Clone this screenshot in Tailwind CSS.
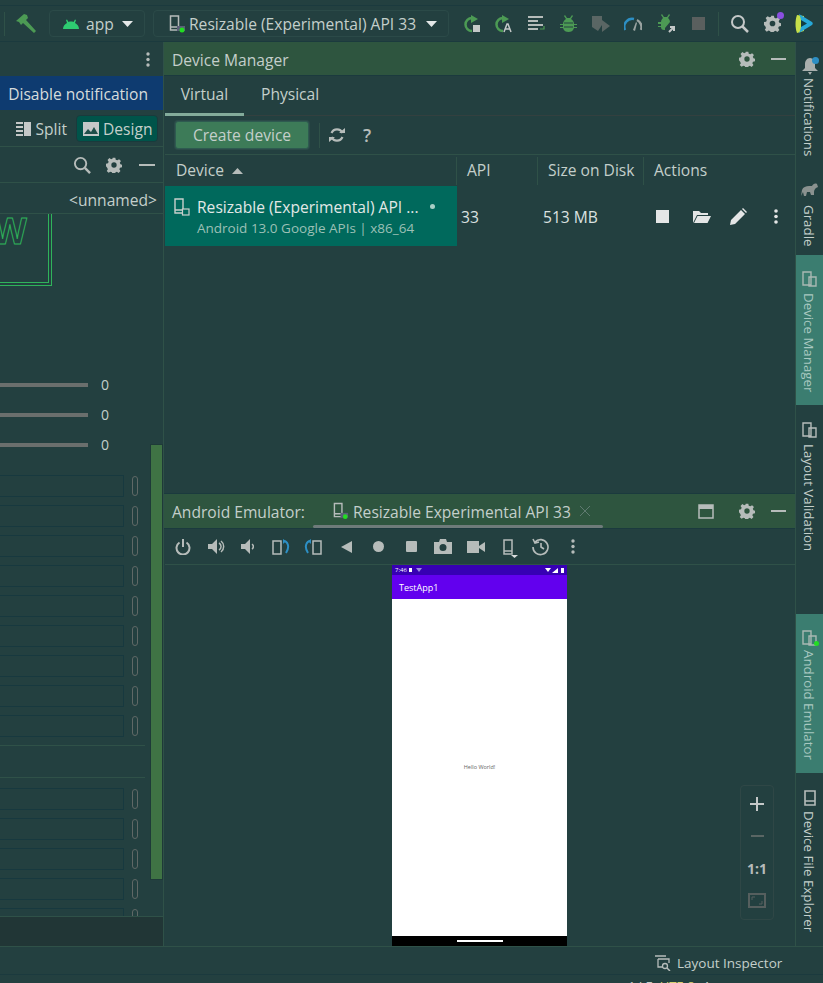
<!DOCTYPE html>
<html lang="en">
<head>
<meta charset="UTF-8">
<title>Android Studio</title>
<script src="https://cdn.jsdelivr.net/npm/@tailwindcss/browser@4"></script>
</head>
<body class="bg-[#234040] overflow-hidden">
<div class="w-[823px] h-[983px] flex flex-col font-['Open_Sans',sans-serif] text-[15.6px] text-[#c4cfcb] overflow-hidden">

  <!-- top toolbar -->
  <div class="h-[37px] shrink-0 mt-[5px] border-t border-t-[#1b3a3e] border-b border-b-[#1b3a3e] flex items-center">
    <div class="w-px h-[24px] bg-[#2f5148] ml-[4px]"></div>
    <svg class="ml-[11px] w-[20px] h-[19px]" viewBox="0 0 20 19"><path d="M0 7L8 0l3 1 1 3-2 2 10 11-2 2L7 9 5 11 3 8z" fill="#4c9a54"/></svg>
    <div class="ml-[13px] w-[96px] h-[27px] rounded border border-[#2b4a48] flex items-center pl-[13px]">
      <svg class="w-[16px] h-[12px]" viewBox="0 0 16 12"><path d="M0 11c0-3 2-5 4-6L3 2l1-.5L5.500 4c1.600-.6 3.400-.6 5 0L12 1.500l1 .5-1 3c2 1 4 3 4 6z" fill="#2ecc71"/></svg>
      <span class="ml-[7px] pt-[3px]">app</span>
      <svg class="ml-[8px] w-[11px] h-[6px]" viewBox="0 0 11 6"><path d="M0 0h11L5.500 6z" fill="#e4e8e8"/></svg>
    </div>
    <div class="ml-[8px] w-[296px] h-[27px] rounded border border-[#2b4a48] flex items-center pl-[15px]">
      <svg class="w-[17px] h-[18px]" viewBox="0 0 17 18"><path d="M1.500 1h8v14h-8zM1.500 12h8" fill="none" stroke="#b6bcba" stroke-width="1.500"/><rect x="8" y="11" width="8" height="5" fill="#5a5f78"/><circle cx="13" cy="15" r="2.500" fill="#22dd22"/></svg>
      <span class="ml-[3px] pt-[3px] whitespace-nowrap">Resizable (Experimental) API 33</span>
      <svg class="ml-[10px] w-[11px] h-[6px]" viewBox="0 0 11 6"><path d="M0 0h11L5.500 6z" fill="#e4e8e8"/></svg>
    </div>
    <div class="ml-[14px] flex items-center">
      <svg class="w-[18px] h-[18px]" viewBox="0 0 18 18"><path d="M9 3a6.500 6.500 0 1 0 0 13" fill="none" stroke="#4c9a54" stroke-width="2.500"/><path d="M8 0l7 4-7 4z" fill="#4c9a54"/><rect x="10" y="10" width="7" height="7" fill="#c4c8c8"/></svg>
      <svg class="ml-[13px] w-[18px] h-[18px]" viewBox="0 0 18 18"><path d="M9 3a6.500 6.500 0 1 0 0 13" fill="none" stroke="#4c9a54" stroke-width="2.500"/><path d="M8 0l7 4-7 4z" fill="#4c9a54"/><path d="M10 17l3-8h1l3 8M11.500 14h4" fill="none" stroke="#c4c8c8" stroke-width="1.500"/></svg>
      <svg class="ml-[16px] w-[18px] h-[18px]" viewBox="0 0 18 18"><path d="M0 1h15v2H0zM0 5h10v2H0zM0 9h15v2H0zM0 13h10v2H0z" fill="#b6bcba"/><path d="M12 14h4v-3" fill="none" stroke="#4c9a54" stroke-width="1.200"/></svg>
      <svg class="ml-[14px] w-[17px] h-[18px]" viewBox="0 0 17 18"><path d="M5 0l2 3h3l2-3 1 1-2 3c2 1 3 3 3 5h3v1h-3v2h3v1h-3c-1 3-3 4-5.500 4S4 16 3 13H0v-1h3v-2H0V9h3c0-2 1-4 3-5L4 1z" fill="#4c9a54"/><path d="M4 8h9M4 12h9" stroke="#234040" stroke-width="1"/></svg>
      <svg class="ml-[15px] w-[19px] h-[18px]" viewBox="0 0 19 18"><path d="M0 1h10v9l-4 6-6-4z" fill="#5a6664"/><path d="M10 5l8 6-8 6z" fill="#5a6664"/></svg>
      <svg class="ml-[13px] w-[18px] h-[14px]" viewBox="0 0 18 14"><path d="M1 13A8 8 0 0 1 10 2" fill="none" stroke="#2d8fc4" stroke-width="2.500"/><path d="M13 3a8 8 0 0 1 4 10" fill="none" stroke="#9aa3a1" stroke-width="2.500"/><path d="M9 13l3-8 1 1-2 8z" fill="#9aa3a1"/></svg>
      <svg class="ml-[16px] w-[19px] h-[19px]" viewBox="0 0 19 19"><path d="M4 0l2 3h3l2-3 1 1-2 3c1 1 2 2 2 4l-5 6v2H6c-2 0-3-1-3-3H0v-1h3v-2H0V8h3c0-2 1-3 2-4L3 1z" fill="#4c9a54"/><path d="M11 18l5-5m-4 0h4v4" fill="none" stroke="#c4c8c8" stroke-width="2"/></svg>
      <div class="ml-[15px] w-[13px] h-[13px] bg-[#5a5f5e]"></div>
    </div>
    <div class="w-px h-[24px] bg-[#2f5148] ml-[13px]"></div>
    <svg class="ml-[11px] w-[19px] h-[19px]" viewBox="0 0 19 19"><circle cx="8" cy="8" r="6" fill="none" stroke="#c4c8c8" stroke-width="2"/><path d="M12.500 12.500L18 18" stroke="#c4c8c8" stroke-width="2.500"/></svg>
    <div class="relative ml-[15px] w-[17px] h-[17px]">
      <svg class="w-[17px] h-[17px]" viewBox="0 0 24 24"><path d="M10 1h4l.6 3 2.400 1 2.600-1.700 2.800 2.800L20.700 8.700l1 2.300 2.300.5v4l-3 .6-1 2.400 1.700 2.600-2.800 2.800-2.600-1.700-2.300 1-.5 2.800h-4l-.6-3-2.400-1-2.600 1.700-2.800-2.800 1.700-2.600-1-2.300L0 14v-4l3-.6 1-2.400-1.700-2.600 2.800-2.800L7.700 3.300l2.300-1zM12 8a4 4 0 1 0 0 8 4 4 0 0 0 0-8z" fill="#b6bcba"/></svg>
      <div class="absolute -top-[3px] -right-[3px] w-[7px] h-[7px] rounded-full bg-[#8a4fe0]"></div>
    </div>
    <svg class="ml-[14px] w-[18px] h-[19px]" viewBox="0 0 18 19"><path d="M2 1l7 1v15l-7 2c-2-5-2-13 0-18z" fill="#c6e04a"/><path d="M4 0l13 8c1 1 1 2 0 3L4 19c3-6 3-13 0-19z" fill="#27a8d8"/><path d="M6 6l6 3.500L6 13z" fill="#123c44"/></svg>
  </div>

  <div class="flex-1 flex min-h-0">

    <!-- left pane -->
    <div class="relative w-[164px] shrink-0 border-r border-[#2f5148] flex flex-col overflow-hidden">
      <div class="h-[34px] shrink-0 flex items-center justify-end pr-[13px]">
        <svg class="w-[4px] h-[15px]" viewBox="0 0 4 15"><circle cx="2" cy="2" r="1.700" fill="#b6bcba"/><circle cx="2" cy="7.500" r="1.700" fill="#b6bcba"/><circle cx="2" cy="13" r="1.700" fill="#b6bcba"/></svg>
      </div>
      <div class="h-[34px] shrink-0 pt-[4px] bg-[#0e3b70] flex items-center justify-end pr-[15px] text-[#d6dcdc] whitespace-nowrap">Disable notification</div>
      <div class="h-[37px] shrink-0 pt-[1px] border-b border-[#2f5148] flex items-center justify-end pr-[5px]">
        <svg class="w-[15px] h-[14px]" viewBox="0 0 15 14"><path d="M0 0h7v2H0zM0 4h7v2H0zM0 8h7v2H0zM0 12h7v2H0z" fill="#c4c8c8"/><rect x="8" width="7" height="14" fill="#c4c8c8"/></svg>
        <span class="ml-[4px] pt-[2px]">Split</span>
        <div class="ml-[9px] w-[82px] h-[27px] rounded-[4px] bg-[#00544a] border border-[#1a3a3c] flex items-center pl-[6px]">
          <svg class="w-[16px] h-[14px]" viewBox="0 0 16 14"><rect width="16" height="14" fill="#c4c8c8"/><path d="M1 12l4-5 3 3 3-5 4 7z" fill="#1f4f4a"/></svg>
          <span class="ml-[4px] pt-[2px]">Design</span>
        </div>
      </div>
      <div class="h-[36px] shrink-0 border-b border-[#2f5148] flex items-center justify-end pr-[8px]">
        <svg class="w-[18px] h-[18px]" viewBox="0 0 19 19"><circle cx="8" cy="8" r="6" fill="none" stroke="#b6bcba" stroke-width="2"/><path d="M12.500 12.500L18 18" stroke="#b6bcba" stroke-width="2.500"/></svg>
        <svg class="ml-[15px] w-[16px] h-[16px]" viewBox="0 0 24 24"><path d="M10 1h4l.6 3 2.400 1 2.600-1.700 2.800 2.800L20.700 8.700l1 2.300 2.300.5v4l-3 .6-1 2.400 1.700 2.600-2.800 2.800-2.600-1.700-2.300 1-.5 2.800h-4l-.6-3-2.400-1-2.600 1.700-2.800-2.800 1.700-2.600-1-2.300L0 14v-4l3-.6 1-2.400-1.700-2.600 2.800-2.800L7.700 3.300l2.300-1zM12 8a4 4 0 1 0 0 8 4 4 0 0 0 0-8z" fill="#b6bcba"/></svg>
        <div class="ml-[17px] w-[16px] h-[2px] bg-[#b6bcba]"></div>
      </div>
      <div class="h-[31px] shrink-0 pt-[5px] flex items-center justify-end pr-[6px] text-[#c4cfcb] border-b border-[#2f5148]">&lt;unnamed&gt;</div>

      <div class="flex-1 min-h-0 overflow-hidden flex flex-col pr-[20px]">
        <!-- preview box -->
        <div class="h-[72px] w-[52px] shrink-0 border-r-[4px] border-b-[4px] border-double border-[#2fb35a] flex items-start">
          <span class="shrink-0 text-transparent [-webkit-text-stroke:1px_#2fb35a] text-[35px] leading-[36px] font-bold -ml-[7px] -mt-[1px]">W</span>
        </div>
        <!-- sliders -->
        <div class="mt-[92px] flex flex-col gap-[17px]">
          <div class="flex items-center h-[13px]"><div class="w-[88px] h-[4px] bg-[#6a6f6d]"></div><span class="ml-[13px] text-[14px]">0</span></div>
          <div class="flex items-center h-[13px]"><div class="w-[88px] h-[4px] bg-[#6a6f6d]"></div><span class="ml-[13px] text-[14px]">0</span></div>
          <div class="flex items-center h-[13px]"><div class="w-[88px] h-[4px] bg-[#6a6f6d]"></div><span class="ml-[13px] text-[14px]">0</span></div>
        </div>
        <!-- field rows -->
        <div class="mt-[24px] -ml-[2px] flex flex-col gap-[8px]">
          <div class="flex items-center h-[22px] shrink-0"><div class="w-[126px] h-[22px] shrink-0 border border-[#17393f]"></div><div class="ml-[8px] w-[6px] h-[20px] shrink-0 rounded-full border border-[#5f6866]"></div></div>
          <div class="flex items-center h-[22px] shrink-0"><div class="w-[126px] h-[22px] shrink-0 border border-[#17393f]"></div><div class="ml-[8px] w-[6px] h-[20px] shrink-0 rounded-full border border-[#5f6866]"></div></div>
          <div class="flex items-center h-[22px] shrink-0"><div class="w-[126px] h-[22px] shrink-0 border border-[#17393f]"></div><div class="ml-[8px] w-[6px] h-[20px] shrink-0 rounded-full border border-[#5f6866]"></div></div>
          <div class="flex items-center h-[22px] shrink-0"><div class="w-[126px] h-[22px] shrink-0 border border-[#17393f]"></div><div class="ml-[8px] w-[6px] h-[20px] shrink-0 rounded-full border border-[#5f6866]"></div></div>
          <div class="flex items-center h-[22px] shrink-0"><div class="w-[126px] h-[22px] shrink-0 border border-[#17393f]"></div><div class="ml-[8px] w-[6px] h-[20px] shrink-0 rounded-full border border-[#5f6866]"></div></div>
          <div class="flex items-center h-[22px] shrink-0"><div class="w-[126px] h-[22px] shrink-0 border border-[#17393f]"></div><div class="ml-[8px] w-[6px] h-[20px] shrink-0 rounded-full border border-[#5f6866]"></div></div>
          <div class="flex items-center h-[22px] shrink-0"><div class="w-[126px] h-[22px] shrink-0 border border-[#17393f]"></div><div class="ml-[8px] w-[6px] h-[20px] shrink-0 rounded-full border border-[#5f6866]"></div></div>
          <div class="flex items-center h-[22px] shrink-0"><div class="w-[126px] h-[22px] shrink-0 border border-[#17393f]"></div><div class="ml-[8px] w-[6px] h-[20px] shrink-0 rounded-full border border-[#5f6866]"></div></div>
          <div class="flex items-center h-[22px] shrink-0"><div class="w-[126px] h-[22px] shrink-0 border border-[#17393f]"></div><div class="ml-[8px] w-[6px] h-[20px] shrink-0 rounded-full border border-[#5f6866]"></div></div>
        </div>
        <div class="mt-[8px] h-[33px] w-[145px] shrink-0 border-y border-[#2f5148]"></div>
        <div class="mt-[10px] -ml-[2px] flex flex-col gap-[8px]">
          <div class="flex items-center h-[22px] shrink-0"><div class="w-[126px] h-[22px] shrink-0 border border-[#17393f]"></div><div class="ml-[8px] w-[6px] h-[20px] shrink-0 rounded-full border border-[#5f6866]"></div></div>
          <div class="flex items-center h-[22px] shrink-0"><div class="w-[126px] h-[22px] shrink-0 border border-[#17393f]"></div><div class="ml-[8px] w-[6px] h-[20px] shrink-0 rounded-full border border-[#5f6866]"></div></div>
          <div class="flex items-center h-[22px] shrink-0"><div class="w-[126px] h-[22px] shrink-0 border border-[#17393f]"></div><div class="ml-[8px] w-[6px] h-[20px] shrink-0 rounded-full border border-[#5f6866]"></div></div>
          <div class="flex items-center h-[22px] shrink-0"><div class="w-[126px] h-[22px] shrink-0 border border-[#17393f]"></div><div class="ml-[8px] w-[6px] h-[20px] shrink-0 rounded-full border border-[#5f6866]"></div></div>
          <div class="flex items-center h-[22px] shrink-0"><div class="w-[126px] h-[22px] shrink-0 border border-[#17393f]"></div><div class="ml-[8px] w-[6px] h-[20px] shrink-0 rounded-full border border-[#5f6866]"></div></div>
        </div>
      </div>
      <div class="h-[30px] shrink-0 bg-[#213636] border-t border-[#2f5148]"></div>
      <!-- scrollbar over the panel -->
      <div class="absolute left-[150px] top-[402px] w-[13px] h-[436px] bg-[#3f7344] border border-[#1e3a38]"></div>
    </div>

    <!-- center column -->
    <div class="flex-1 min-w-0 flex flex-col border-l border-[#234040]">
      <!-- device manager -->
      <div class="h-[34px] shrink-0 -ml-[1px] bg-[#2e553f] border-b border-[#1b3a3e] flex items-center pl-[8px] pr-[9px]">
        <span class="flex-1 pt-[4px]">Device Manager</span>
        <svg class="w-[16px] h-[16px]" viewBox="0 0 24 24"><path d="M10 1h4l.6 3 2.400 1 2.600-1.700 2.800 2.800L20.700 8.700l1 2.300 2.300.5v4l-3 .6-1 2.400 1.700 2.600-2.800 2.800-2.600-1.700-2.300 1-.5 2.800h-4l-.6-3-2.400-1-2.600 1.700-2.800-2.800 1.700-2.600-1-2.300L0 14v-4l3-.6 1-2.400-1.700-2.600 2.800-2.800L7.700 3.300l2.300-1zM12 8a4 4 0 1 0 0 8 4 4 0 0 0 0-8z" fill="#b6bcba"/></svg>
        <div class="ml-[16px] w-[15px] h-[2px] bg-[#b6bcba]"></div>
      </div>
      <div class="h-[40px] shrink-0 flex border-b border-[#33403f]">
        <div class="w-[79px] h-[40px] pt-[1px] flex items-center justify-center border-b-[3px] border-[#83ab9b]">Virtual</div>
        <div class="pl-[17px] pb-[1px] flex items-center">Physical</div>
      </div>
      <div class="h-[39px] shrink-0 border-b border-[#2f5148] flex items-center pl-[10px]">
        <div class="w-[134px] h-[28px] pt-[2px] rounded-[3px] bg-[#3d7b58] border border-[#2e5a50] shadow-[0_0_0_1px_#2b4a48] flex items-center justify-center">Create device</div>
        <div class="ml-[10px] w-px h-[25px] bg-[#2f5148]"></div>
        <svg class="ml-[9px] w-[16px] h-[16px]" viewBox="0 0 16 16"><path d="M13.500 6A6 6 0 0 0 2.500 6M2.500 10A6 6 0 0 0 13.500 10" fill="none" stroke="#b6bcba" stroke-width="2.200"/><path d="M10 6h6V1zM6 10H0v5z" fill="#b6bcba"/></svg>
        <span class="ml-[18px] text-[#b6bcba] text-[18px] font-semibold">?</span>
      </div>
      <div class="h-[31px] shrink-0 flex items-center">
        <div class="w-[292px] h-[28px] flex items-center pl-[11px] border-r border-[#2f5148]">Device<svg class="ml-[8px] w-[11px] h-[6px]" viewBox="0 0 11 6"><path d="M0 6h11L5.500 0z" fill="#b6bcba"/></svg></div>
        <div class="w-[81px] h-[28px] flex items-center pl-[10px] border-r border-[#2f5148]">API</div>
        <div class="w-[106px] h-[28px] flex items-center pl-[10px] border-r border-[#2f5148] whitespace-nowrap">Size on Disk</div>
        <div class="pl-[10px]">Actions</div>
      </div>
      <div class="h-[60px] shrink-0 flex items-center">
        <div class="w-[292px] h-[60px] bg-[#00695c] flex items-start pl-[9px] pt-[11px] relative">
          <svg class="w-[16px] h-[20px] mt-[1px]" viewBox="0 0 16 20"><path d="M1 1h8v14H1zM1 12h8" fill="none" stroke="#c8d0cc" stroke-width="1.400"/><rect x="8.500" y="11" width="6.500" height="6" fill="#00695c" stroke="#c8d0cc" stroke-width="1.200"/></svg>
          <div class="ml-[7px] flex flex-col whitespace-nowrap">
            <span class="leading-[20px] text-[#e2e8e6]">Resizable (Experimental) API ...</span>
            <span class="leading-[20px] text-[13.5px] text-[#9cc0b6] mt-[1px]">Android 13.0 Google APIs | x86_64</span>
          </div>
          <div class="absolute left-[265px] top-[18px] w-[5px] h-[5px] rounded-full bg-[#a8cfc6]"></div>
        </div>
        <span class="w-[81px] pl-[4px] pt-[4px] text-[#dbe2e0]">33</span>
        <span class="w-[106px] pl-[5px] pt-[4px] text-[#dbe2e0]">513 MB</span>
        <div class="ml-[12px] flex items-center">
          <div class="w-[13px] h-[13px] bg-[#e4e6e6]"></div>
          <svg class="ml-[24px] w-[18px] h-[13px]" viewBox="0 0 18 13"><path d="M0 13V1h6l2 2h7v2H4zM1 13l3.500-7H18l-3.500 7z" fill="#e4e6e6"/></svg>
          <svg class="ml-[19px] w-[17px] h-[17px]" viewBox="0 0 17 17"><path d="M0 17l1-5L11 2l4 4L5 16zM12 1l1-1 4 4-1 1z" fill="#e4e6e6"/></svg>
          <svg class="ml-[27px] w-[4px] h-[15px]" viewBox="0 0 4 15"><circle cx="2" cy="2" r="1.800" fill="#e4e6e6"/><circle cx="2" cy="7.500" r="1.800" fill="#e4e6e6"/><circle cx="2" cy="13" r="1.800" fill="#e4e6e6"/></svg>
        </div>
      </div>
      <div class="flex-1"></div>

      <!-- emulator -->
      <div class="h-[36px] shrink-0 -ml-[1px] bg-[#2e553f] border-y border-[#1b3a3e] flex items-center pl-[8px] pr-[9px] relative">
        <span class="w-[133px] shrink-0 pt-[4px] whitespace-nowrap">Android Emulator:</span>
        <svg class="ml-[28px] w-[16px] h-[18px]" viewBox="0 0 17 18"><path d="M1.500 1h8v14h-8zM1.500 12h8" fill="none" stroke="#b6bcba" stroke-width="1.500"/><rect x="8" y="11" width="8" height="5" fill="#5a5f78"/><circle cx="13" cy="15" r="2.500" fill="#22dd22"/></svg>
        <span class="ml-[4px] pt-[4px] whitespace-nowrap">Resizable Experimental API 33</span>
        <svg class="ml-[9px] w-[10px] h-[10px]" viewBox="0 0 10 10"><path d="M0 0l10 10M10 0L0 10" stroke="#5f7a70" stroke-width="1"/></svg>
        <div class="flex-1"></div>
        <svg class="w-[16px] h-[15px]" viewBox="0 0 16 15"><path d="M1 1h14v13H1z" fill="none" stroke="#b6bcba" stroke-width="1.500"/><rect x="1" y="1" width="14" height="4" fill="#b6bcba"/></svg>
        <svg class="ml-[25px] w-[16px] h-[16px]" viewBox="0 0 24 24"><path d="M10 1h4l.6 3 2.400 1 2.600-1.700 2.800 2.800L20.700 8.700l1 2.300 2.300.5v4l-3 .6-1 2.400 1.700 2.600-2.800 2.800-2.600-1.700-2.300 1-.5 2.800h-4l-.6-3-2.400-1-2.600 1.700-2.800-2.800 1.700-2.600-1-2.300L0 14v-4l3-.6 1-2.400-1.700-2.600 2.800-2.800L7.700 3.300l2.300-1zM12 8a4 4 0 1 0 0 8 4 4 0 0 0 0-8z" fill="#b6bcba"/></svg>
        <div class="ml-[16px] w-[15px] h-[2px] bg-[#b6bcba]"></div>
        <div class="absolute left-[149px] bottom-0 w-[290px] h-[3px] rounded-full bg-[#6e7b7a]"></div>
      </div>
      <div class="h-[36px] shrink-0 border-b border-[#2f5148] flex items-center pl-[10px]">
        <svg class="w-[16px] h-[16px]" viewBox="0 0 16 16"><path d="M4.500 3.500a6.500 6.500 0 1 0 7 0M8 0v8" fill="none" stroke="#b6bcba" stroke-width="2"/></svg>
        <svg class="ml-[17px] w-[17px] h-[15px]" viewBox="0 0 17 15"><path d="M0 5h4l5-5v15l-5-5H0z" fill="#b6bcba"/><path d="M11 4a4 4 0 0 1 0 7M13 2a7 7 0 0 1 0 11" fill="none" stroke="#b6bcba" stroke-width="1.500"/></svg>
        <svg class="ml-[16px] w-[13px] h-[15px]" viewBox="0 0 13 15"><path d="M0 5h4l5-5v15l-5-5H0z" fill="#b6bcba"/><path d="M11 5a3 3 0 0 1 0 5" fill="none" stroke="#b6bcba" stroke-width="1.500"/></svg>
        <svg class="ml-[18px] w-[18px] h-[16px]" viewBox="0 0 18 16"><rect x="1" y="2" width="8" height="13" fill="none" stroke="#b6bcba" stroke-width="1.500"/><path d="M11 2c5 0 7 6 3 12" fill="none" stroke="#2d8fc4" stroke-width="2"/><path d="M11 0l3 2-3 3z" fill="#2d8fc4"/></svg>
        <svg class="ml-[14px] w-[18px] h-[16px]" viewBox="0 0 18 16"><rect x="9" y="2" width="8" height="13" fill="none" stroke="#b6bcba" stroke-width="1.500"/><path d="M7 2C2 2 0 8 4 14" fill="none" stroke="#2d8fc4" stroke-width="2"/><path d="M7 0L4 2l3 3z" fill="#2d8fc4"/></svg>
        <svg class="ml-[19px] w-[11px] h-[12px]" viewBox="0 0 11 12"><path d="M11 0v12L0 6z" fill="#b6bcba"/></svg>
        <div class="ml-[21px] w-[11px] h-[11px] rounded-full bg-[#b6bcba]"></div>
        <div class="ml-[22px] w-[11px] h-[11px] rounded-[1px] bg-[#b6bcba]"></div>
        <svg class="ml-[17px] w-[18px] h-[15px]" viewBox="0 0 18 15"><path d="M0 3h5l1-3h6l1 3h5v12H0zM9 5a3.500 3.500 0 1 0 0 7 3.500 3.500 0 0 0 0-7z" fill="#b6bcba" fill-rule="evenodd"/></svg>
        <svg class="ml-[15px] w-[18px] h-[12px]" viewBox="0 0 18 12"><path d="M0 0h12v12H0zM12 5l6-4v10l-6-4z" fill="#b6bcba"/></svg>
        <svg class="ml-[18px] w-[17px] h-[19px] mt-[4px]" viewBox="0 0 17 19"><path d="M1 1h8v14H1zM1 12h8" fill="none" stroke="#b6bcba" stroke-width="1.500"/><path d="M8 16h7l-3.500 3z" fill="#d8dcdc"/></svg>
        <svg class="ml-[12px] w-[18px] h-[18px]" viewBox="0 0 18 18"><path d="M3 4a7.500 7.500 0 1 1-2 5M1 1l2 4 4-1M9 5v4l3 2" fill="none" stroke="#b6bcba" stroke-width="1.600"/></svg>
        <svg class="ml-[21px] w-[4px] h-[15px]" viewBox="0 0 4 15"><circle cx="2" cy="2" r="1.700" fill="#b6bcba"/><circle cx="2" cy="7.500" r="1.700" fill="#b6bcba"/><circle cx="2" cy="13" r="1.700" fill="#b6bcba"/></svg>
      </div>
      <!-- device screen -->
      <div class="relative h-[381px] shrink-0 pl-[227px]">
        <div class="w-[175px] h-[381px] flex flex-col bg-white">
          <div class="h-[10px] shrink-0 bg-[#3700b3] flex items-center px-[3px] text-[6px] leading-[6px] text-white">
            <span>7:46</span>
            <span class="ml-[2px] w-[3px] h-[4px] bg-white"></span>
            <svg class="ml-[4px] w-[6px] h-[4px]" viewBox="0 0 6 4"><path d="M0 0h6L3 4z" fill="#9a8ae0"/></svg>
            <div class="flex-1"></div>
            <svg class="w-[6px] h-[4px]" viewBox="0 0 6 4"><path d="M0 0h6L3 4z" fill="#fff"/></svg>
            <svg class="ml-[1px] w-[6px] h-[5px]" viewBox="0 0 6 5"><path d="M6 0v5H0z" fill="#fff"/></svg>
            <span class="ml-[3px] w-[3px] h-[5px] bg-white"></span>
          </div>
          <div class="h-[24px] shrink-0 pt-[2px] bg-[#6200ee] flex items-center pl-[7px] text-[9px] text-white">TestApp1</div>
          <div class="flex-1 flex items-center justify-center text-[5.500px] text-[#666]"><span class="-mt-[1px]">Hello World!</span></div>
          <div class="h-[10px] shrink-0 bg-black flex items-center justify-center"><div class="w-[46px] h-[2px] bg-white"></div></div>
        </div>
        <!-- zoom controls float over the screen area -->
        <div class="absolute left-[575px] top-[220px] w-[34px] h-[135px] rounded-[4px] border border-[#2f4746] flex flex-col items-center pt-[11px]">
          <svg class="w-[14px] h-[14px] shrink-0" viewBox="0 0 14 14"><path d="M0 7h14M7 0v14" stroke="#c4c8c8" stroke-width="2"/></svg>
          <div class="mt-[24px] w-[13px] h-[2px] bg-[#5a6664] shrink-0"></div>
          <span class="mt-[25px] text-[14px] leading-[14px] font-bold text-[#b6bcba]">1:1</span>
          <svg class="mt-[17px] w-[18px] h-[15px] shrink-0" viewBox="0 0 18 15"><rect x="1" y="1" width="16" height="13" fill="none" stroke="#565f5e" stroke-width="2"/><path d="M4 7V4h3M14 8v3h-3" fill="none" stroke="#565f5e" stroke-width="1"/></svg>
        </div>
      </div>
    </div>

    <!-- right tool strip -->
    <div class="w-[28px] shrink-0 border-l border-[#2f5148] flex flex-col items-center text-[13.3px] overflow-hidden">
      <div class="mt-[16px] relative w-[16px] h-[17px] shrink-0">
        <svg class="w-[16px] h-[17px]" viewBox="0 0 16 17"><path d="M8 0c3 0 5 3 5 6v4l3 3H0l3-3V6c0-3 2-6 5-6zM6 14h4l-2 3z" fill="#a9afad"/></svg>
        <div class="absolute -top-[1px] -right-[1px] w-[7px] h-[7px] rounded-full bg-[#2d8fc4]"></div>
      </div>
      <span class="mt-[3px] h-[78px] shrink-0 mr-[3px] [writing-mode:vertical-rl] whitespace-nowrap">Notifications</span>
      <svg class="mt-[27px] w-[17px] h-[14px] shrink-0" viewBox="0 0 17 14"><path d="M0 13l1-6c1-3 4-4 7-4h3c1-2 3-3 5-2l1 3-2 1c-1 1-2 2-2 4v3h-3l-1-3H6l-1 4H3L2 9z" fill="#8a918f"/></svg>
      <span class="mt-[8px] h-[39px] shrink-0 mr-[3px] [writing-mode:vertical-rl] whitespace-nowrap">Gradle</span>
      <div class="mt-[11px] w-full h-[150px] shrink-0 bg-[#3b7d70] flex flex-col items-center pt-[16px] text-[#a8c8c0]">
        <svg class="w-[15px] h-[16px] shrink-0" viewBox="0 0 15 16"><path d="M1 1h8v13H1zM7 6h7v9H7z" fill="none" stroke="#a9b8b3" stroke-width="1.400"/></svg>
        <span class="mt-[6px] mr-[3px] [writing-mode:vertical-rl] whitespace-nowrap">Device Manager</span>
      </div>
      <svg class="mt-[17px] w-[15px] h-[16px] shrink-0" viewBox="0 0 15 16"><path d="M1 1h8v13H1zM7 6h7v9H7z" fill="none" stroke="#b6bcba" stroke-width="1.400"/></svg>
      <span class="mt-[6px] h-[106px] shrink-0 mr-[3px] [writing-mode:vertical-rl] whitespace-nowrap">Layout Validation</span>
      <div class="mt-[64px] w-full h-[159px] shrink-0 bg-[#3b7d70] flex flex-col items-center pt-[16px] text-[#a8c8c0]">
        <div class="relative w-[15px] h-[16px] shrink-0">
          <svg class="w-[15px] h-[16px]" viewBox="0 0 15 16"><path d="M1 1h8v13H1zM7 6h7v9H7z" fill="none" stroke="#a9b8b3" stroke-width="1.400"/></svg>
          <div class="absolute right-[-2px] bottom-[0px] w-[5px] h-[5px] rounded-full bg-[#22dd22]"></div>
        </div>
        <span class="mt-[4px] mr-[3px] [writing-mode:vertical-rl] whitespace-nowrap">Android Emulator</span>
      </div>
      <svg class="mt-[17px] w-[12px] h-[16px] shrink-0" viewBox="0 0 12 16"><path d="M1 1h10v14H1zM1 11h10" fill="none" stroke="#b6bcba" stroke-width="1.600"/></svg>
      <span class="mt-[5px] mr-[3px] [writing-mode:vertical-rl] whitespace-nowrap">Device File Explorer</span>
    </div>
  </div>

  <!-- bottom bars -->
  <div class="h-[29px] shrink-0 pt-[4px] border-t border-[#2f5148] border-b border-b-[#1b3a3e] flex items-center pl-[655px] text-[13.5px]">
    <svg class="w-[16px] h-[16px]" viewBox="0 0 16 16"><path d="M0 1h11M3 4h11v4M3 4v8h5" fill="none" stroke="#b6bcba" stroke-width="1.300"/><circle cx="10" cy="11" r="2.500" fill="none" stroke="#b6bcba" stroke-width="1.300"/><path d="M12 13l3 3" stroke="#b6bcba" stroke-width="1.500"/></svg>
    <span class="ml-[6px] pt-[2px]">Layout Inspector</span>
  </div>
  <div class="h-[8px] shrink-0 overflow-hidden pl-[628px] pt-[3px] text-[13px] leading-[16px] text-[#c4cfcb] whitespace-nowrap"><span>1 LF</span> <span class="ml-[4px] text-[#d8d070]">UTF-8</span> <span class="ml-[4px]">4 spaces</span></div>
</div>
</body>
</html>
